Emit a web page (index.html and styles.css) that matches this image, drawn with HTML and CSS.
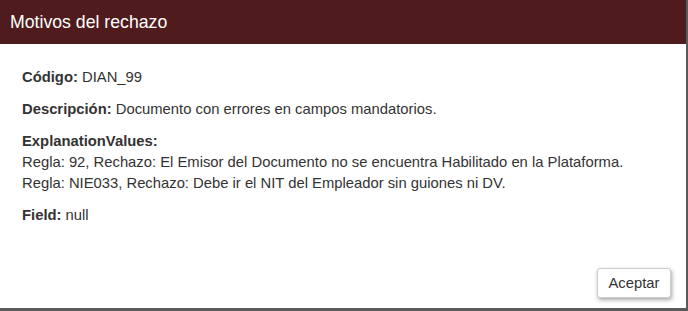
FILE: index.html
```html
<!DOCTYPE html>
<html lang="es">
<head>
<meta charset="utf-8">
<title>Motivos del rechazo</title>
<link rel="stylesheet" href="styles.css">
</head>
<body>
<div class="page">
  <div class="modal">
    <div class="modal-header">
      <h4 class="modal-title">Motivos del rechazo</h4>
    </div>
    <div class="modal-body">
      <p><b>Código:</b> DIAN_99</p>
      <p><b>Descripción:</b> Documento con errores en campos mandatorios.</p>
      <p><b>ExplanationValues:</b><br>
        Regla: 92, Rechazo: El Emisor del Documento no se encuentra Habilitado en la Plataforma.<br>
        Regla: NIE033, Rechazo: Debe ir el NIT del Empleador sin guiones ni DV.</p>
      <p><b>Field:</b> null</p>
    </div>
    <div class="modal-footer">
      <button class="btn" type="button">Aceptar</button>
    </div>
  </div>
  <div class="backdrop-strip"></div>
</div>
</body>
</html>
```

FILE: styles.css
```css
* { box-sizing: border-box; }
html, body {
  margin: 0;
  padding: 0;
  background: #5a5a5a;
  font-family: "Liberation Sans", Arial, sans-serif;
  color: #333;
  overflow: hidden;
}
.page {
  width: 688px;
  height: 311px;
  display: flex;
  flex-direction: column;
}
.modal {
  width: 686px;
  height: 308px;
  background: #fff;
  display: flex;
  flex-direction: column;
  flex: none;
}
.modal-header {
  background: #4f1b1d;
  height: 44px;
  padding: 0 10px;
  display: flex;
  align-items: center;
  flex: none;
}
.modal-title {
  margin: 0;
  color: #fff;
  font-size: 17.7px;
  font-weight: normal;
  line-height: 20px;
  padding-bottom: 1px;
}
.modal-body {
  padding: 23px 22px 0;
  font-size: 14.8px;
  line-height: 21px;
  flex: 1;
}
.modal-body p {
  margin: 0 0 11px;
}
.modal-body b { font-weight: bold; color: #333; }
.modal-footer {
  display: flex;
  justify-content: flex-end;
  padding: 0 15px 10px;
  flex: none;
}
.btn {
  font-family: "Liberation Sans", Arial, sans-serif;
  font-size: 14.8px;
  color: #333;
  background: #fff;
  border: 1px solid #ccc;
  border-radius: 3px;
  width: 74px;
  height: 30px;
  padding: 0;
  box-shadow: 1px 2px 4px rgba(0,0,0,0.35);
}
.backdrop-strip {
  flex: 1;
  background: #5a5a5a;
}
```
